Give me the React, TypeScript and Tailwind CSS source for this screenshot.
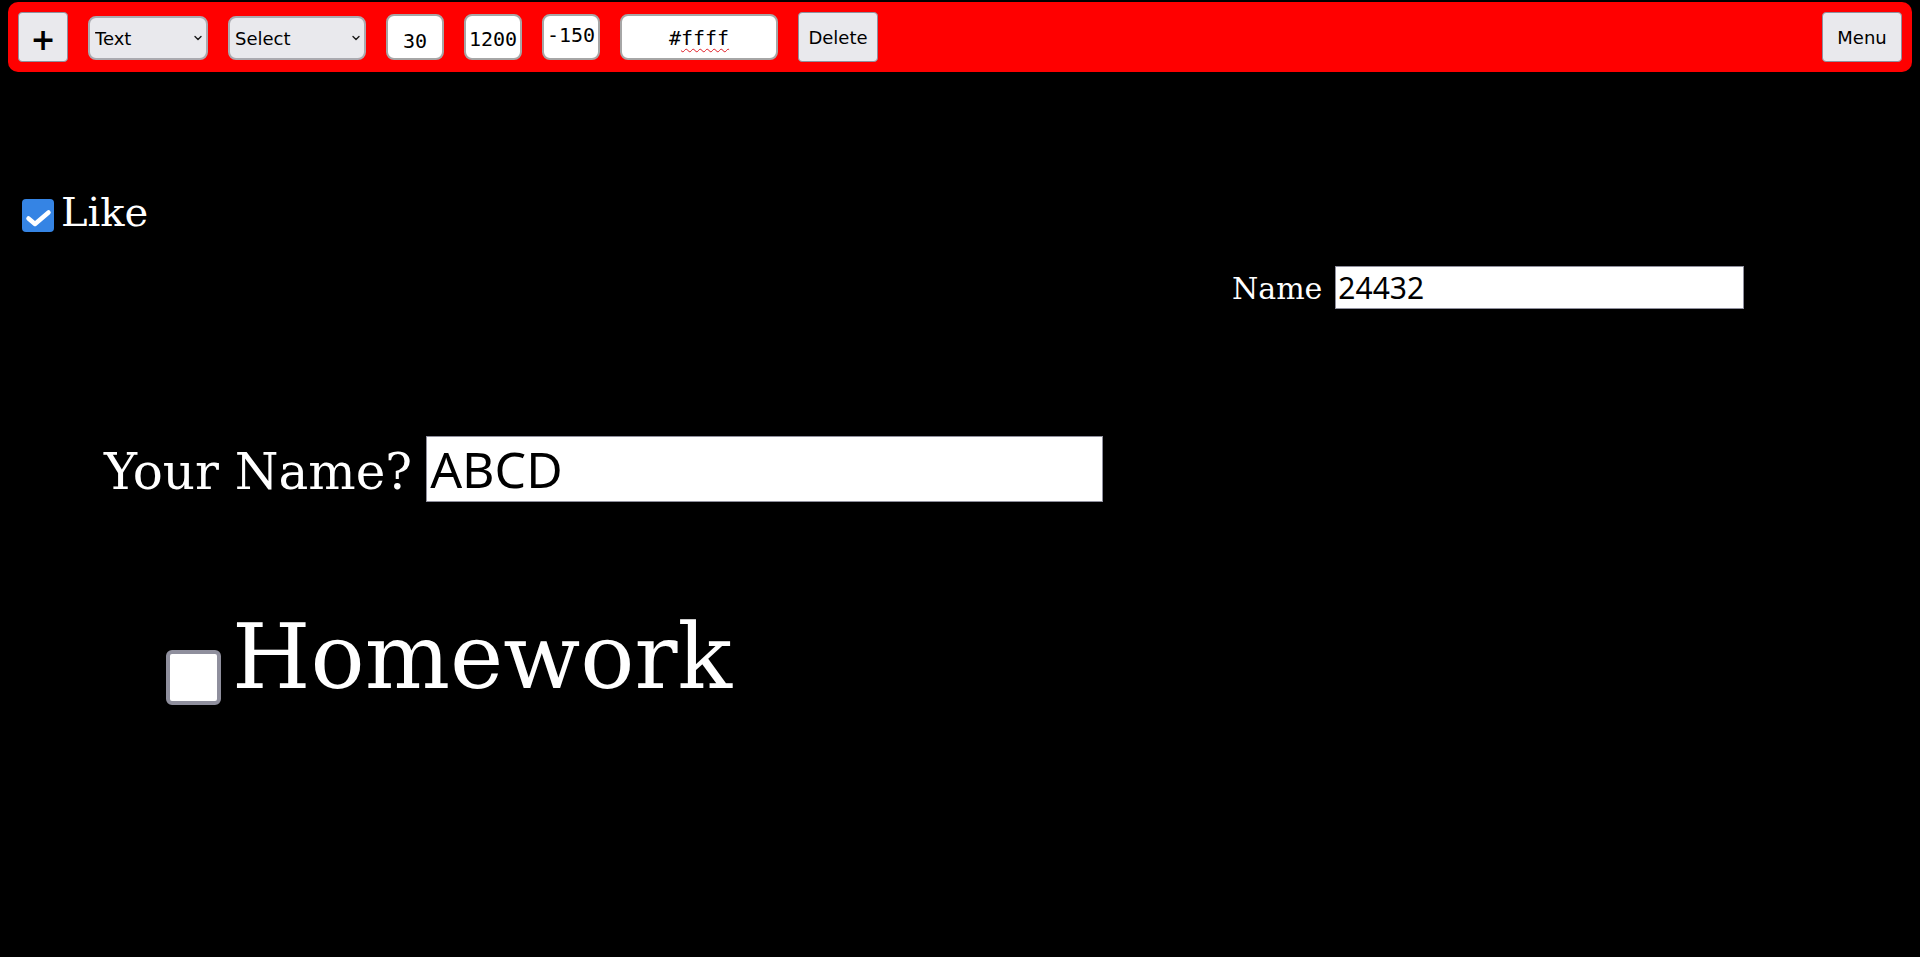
import React from 'react';

const sans = "font-['DejaVu_Sans','Liberation_Sans',sans-serif]";
const noto = "font-['Noto_Sans','Open_Sans',sans-serif]";
const serif = "font-['DejaVu_Serif','Liberation_Serif',serif]";
const mono = "font-['DejaVu_Sans_Mono','Liberation_Mono',monospace]";

function Chevron() {
  return (
    <svg width="8" height="6" viewBox="0 0 8 6" className="pointer-events-none absolute right-[6px] top-1/2 -translate-y-1/2">
      <path d="M1 1.5 L4 4.5 L7 1.5" fill="none" stroke="#1a1a1a" strokeWidth="1.4" strokeLinecap="round" strokeLinejoin="round" />
    </svg>
  );
}

function Dropdown({label, width}: {label: string; width: string}) {
  return (
    <div className={`relative mt-[2px] ${width}`}>
      <select
        defaultValue={label}
        className={`${sans} appearance-none w-full h-[44px] rounded-[8px] border-2 border-[#aaaab0] bg-[#e9e9ed] pl-[5px] pr-6 text-[18px] text-black outline-none`}
      >
        <option>{label}</option>
      </select>
      <Chevron />
    </div>
  );
}

function NumBox({value, pad}: {value: string; pad: string}) {
  return (
    <input
      readOnly
      value={value}
      className={`${mono} ${pad} w-[58px] h-[46px] rounded-[8px] border-2 border-[#a6a6a6] bg-white px-[1px] text-center text-[20px] leading-[23px] text-black outline-none`}
    />
  );
}

function Btn({children, big}: {children: React.ReactNode; big?: boolean}) {
  return (
    <button
      className={`${sans} h-[50px] rounded-[4px] border border-[#8f8f9d] bg-[#e9e9ed] text-black ${
        big ? 'w-[50px] text-[30px] font-bold leading-none' : 'w-[80px] text-[18px]'
      }`}
    >
      {children}
    </button>
  );
}

export default function App() {
  return (
    <div className="relative w-full h-[957px] bg-black overflow-hidden">
      {/* toolbar */}
      <div className="pt-[2px] px-[8px]">
        <div className="flex items-center gap-[20px] h-[70px] rounded-[10px] bg-[#ff0000] pl-[10px] pr-[10px]">
          <Btn big>
            <span className="inline-block translate-y-[3px]">+</span>
          </Btn>
          <Dropdown label="Text" width="w-[120px]" />
          <Dropdown label="Select" width="w-[138px]" />
          <NumBox value="30" pad="pt-[13px] pb-[6px]" />
          <NumBox value="1200" pad="pt-[11px] pb-[8px]" />
          <NumBox value="-150" pad="pt-[7px] pb-[12px]" />
          <div className={`${mono} flex justify-center w-[158px] h-[46px] rounded-[8px] border-2 border-[#a6a6a6] bg-white pt-[11px] text-[20px] leading-[23px] text-black`}>
            <span>#</span>
            <span className="underline decoration-wavy decoration-[#e01b24] decoration-1 underline-offset-[3px]">ffff</span>
          </div>
          <Btn>Delete</Btn>
          <div className="ml-auto">
            <Btn>Menu</Btn>
          </div>
        </div>
      </div>

      {/* canvas items */}
      <label className="absolute left-[22px] top-[192px] flex items-start">
        <span className="mt-[7px] flex items-center justify-center w-[32px] h-[33px] rounded-[4px] bg-[#3584e4]">
          <svg width="32" height="33" viewBox="0 0 32 33">
            <path d="M6.5 19.5 L13 25 L26.5 13.5" fill="none" stroke="white" strokeWidth="4.5" strokeLinecap="round" strokeLinejoin="round" />
          </svg>
        </span>
        <span className={`${serif} ml-[7px] text-[40px] leading-[40px] text-white`}>Like</span>
      </label>

      <div className="absolute left-[1232px] top-[266px] flex items-start">
        <span className={`${serif} mt-[8px] text-[30px] leading-[30px] text-white`}>Name</span>
        <input
          readOnly
          value="24432"
          className={`${noto} ml-[13px] w-[409px] h-[43px] border border-[#8f8f9d] bg-white pl-[2px] py-0 text-[30px] leading-[41px] text-black outline-none`}
        />
      </div>

      <div className="absolute left-[104px] top-[436px] flex items-start">
        <span className={`${serif} mt-[11px] text-[50px] leading-[50px] text-white whitespace-nowrap`}>Your Name?</span>
        <input
          readOnly
          value="ABCD"
          className={`${noto} ml-[14px] w-[677px] h-[66px] border border-[#8f8f9d] bg-white pl-[3px] py-0 text-[50px] leading-[64px] text-black outline-none`}
        />
      </div>

      <label className="absolute left-[166px] top-[612px] flex items-start">
        <span className="mt-[38px] w-[55px] h-[55px] rounded-[6px] border-[4px] border-[#8f8f9d] bg-white" />
        <span className={`${serif} ml-[11px] text-[90px] leading-[90px] text-white`}>Homework</span>
      </label>
    </div>
  );
}
